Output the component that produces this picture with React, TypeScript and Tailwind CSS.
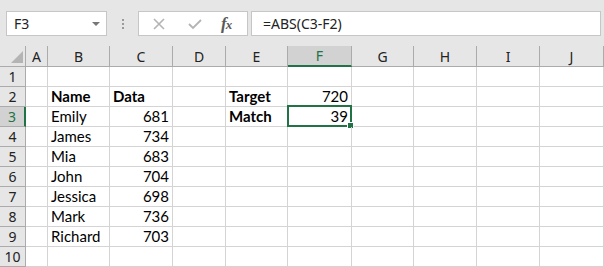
import React from "react";

const cols = ["A", "B", "C", "D", "E", "F", "G", "H", "I", "J"];

// row data: [B, C, E, F]
const rows: { b?: string; c?: string; e?: string; f?: string; bold?: boolean }[] = [
  {},
  { b: "Name", c: "Data", e: "Target", f: "720", bold: true },
  { b: "Emily", c: "681", e: "Match", f: "39" },
  { b: "James", c: "734" },
  { b: "Mia", c: "683" },
  { b: "John", c: "704" },
  { b: "Jessica", c: "698" },
  { b: "Mark", c: "736" },
  { b: "Richard", c: "703" },
  {},
];

const gridCols =
  "grid grid-cols-[26px_22px_62px_63px_53px_62px_64px_62px_63px_63px_64px]";

const App: React.FC = () => {
  return (
    <div className="w-[604px] h-[267px] overflow-hidden bg-[#e6e6e6] font-['Liberation_Sans',sans-serif]">
      {/* formula bar */}
      <div className="h-[46px] flex items-start pt-[11px] pl-[6px]">
        <div className="w-[101px] h-[25px] bg-white border border-[#c6c6c6] flex items-center justify-between pl-[7px] pr-[6px]">
          <span className="text-[14px] text-[#222] font-['Noto_Sans',sans-serif]">F3</span>
          <span className="w-0 h-0 border-l-[4px] border-r-[4px] border-t-[4px] border-l-transparent border-r-transparent border-t-[#777]" />
        </div>
        <div className="w-[31px] h-[25px] flex flex-col items-center justify-center gap-[2px]">
          <span className="w-[2px] h-[2px] bg-[#9a9a9a]" />
          <span className="w-[2px] h-[2px] bg-[#9a9a9a]" />
          <span className="w-[2px] h-[2px] bg-[#9a9a9a]" />
        </div>
        <div className="w-[110px] h-[25px] bg-white border border-[#c6c6c6] flex items-center">
          <svg width="14" height="14" viewBox="0 0 14 14" className="ml-[13px]">
            <path d="M2 2 L12 12 M12 2 L2 12" stroke="#b4b4b4" strokeWidth="1.6" />
          </svg>
          <svg width="16" height="14" viewBox="0 0 16 14" className="ml-[21px]">
            <path d="M2 7 L6 11 L14 3" stroke="#b4b4b4" strokeWidth="1.8" fill="none" />
          </svg>
          <span className="ml-[18px] text-[17px] italic font-bold text-[#5a5a5a] font-['Liberation_Serif',serif] tracking-[-1px] leading-none">
            f<span className="text-[13px]">x</span>
          </span>
        </div>
        <div className="ml-[3px] w-[350px] h-[25px] bg-white border border-[#c6c6c6] flex items-center pl-[11px]">
          <span className="text-[14px] text-[#222] font-['Noto_Sans',sans-serif]">=ABS(C3-F2)</span>
        </div>
      </div>

      {/* sheet */}
      <div className={`${gridCols} bg-white`}>
        {/* column headers */}
        <div className="h-[21px] bg-[#e6e6e6] border-r border-b border-[#ababab] flex items-end justify-end pr-[2px] pb-[3px]">
          <svg width="12" height="12" viewBox="0 0 12 12">
            <polygon points="12,0 12,12 0,12" fill="#b4b4b4" />
          </svg>
        </div>
        {cols.map((c) => (
          <div
            key={c}
            className={
              c === "F"
                ? "h-[21px] bg-[#d2d2d2] border-r border-[#ababab] border-b-2 border-b-[#217346] flex items-center justify-center text-[14px] text-[#217346] font-['Noto_Sans',sans-serif]"
                : "h-[21px] bg-[#e6e6e6] border-r border-b border-[#ababab] flex items-center justify-center text-[14px] text-[#222] font-['Noto_Sans',sans-serif]"
            }
          >
            {c}
          </div>
        ))}

        {rows.map((r, i) => {
          const n = i + 1;
          const sel = n === 3;
          const cell = "h-[20px] border-r border-b border-[#d4d4d4] flex items-end pb-[1px] text-[15px] text-black font-['Lato',sans-serif] leading-[18px]";
          const wt = r.bold ? " font-bold" : "";
          return (
            <React.Fragment key={n}>
              <div
                className={
                  sel
                    ? "h-[20px] bg-[#d2d2d2] border-b border-[#ababab] border-r-2 border-r-[#217346] flex items-center justify-center text-[14px] text-[#217346] font-['Noto_Sans',sans-serif]"
                    : "h-[20px] bg-[#e6e6e6] border-r border-b border-[#ababab] flex items-center justify-center text-[14px] text-[#222] font-['Noto_Sans',sans-serif]"
                }
              >
                {n}
              </div>
              <div className={cell} />
              <div className={cell + wt + " pl-[3px]"}>{r.b}</div>
              <div className={cell + wt + (r.bold ? " pl-[3px]" : " justify-end pr-[3px]")}>
                {r.c}
              </div>
              <div className={cell} />
              <div className={cell + " pl-[3px] font-bold"}>{r.e}</div>
              <div className={cell + " justify-end pr-[3px] relative"}>
                {r.f}
                {sel && (
                  <div className="absolute -left-[1px] -top-[2px] right-[-1px] bottom-[-1px] border-2 border-[#217346]">
                    <span className="absolute -right-[4px] -bottom-[4px] w-[7px] h-[7px] bg-[#217346] border border-white" />
                  </div>
                )}
              </div>
              <div className={cell} />
              <div className={cell} />
              <div className={cell} />
              <div className={cell} />
            </React.Fragment>
          );
        })}
      </div>
    </div>
  );
};

export default App;
